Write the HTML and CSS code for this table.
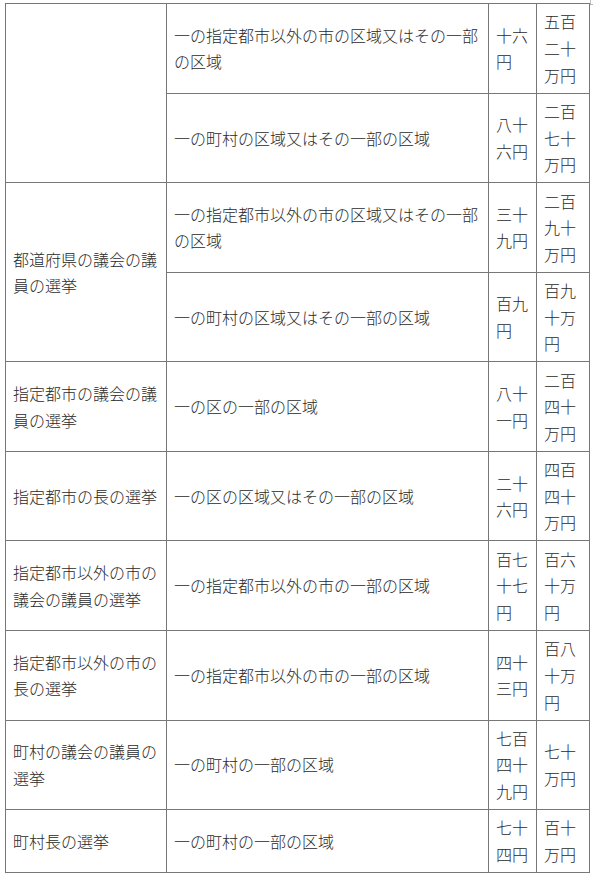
FILE: index.html
```html
<!DOCTYPE html>
<html lang="ja">
<head>
<meta charset="utf-8">
<link rel="stylesheet" href="styles.css">
</head>
<body>
<div class="corner"></div>
<table class="fee-table">
  <colgroup>
    <col class="c1"><col class="c2"><col class="c3"><col class="c4">
  </colgroup>
  <tbody>
    <tr>
      <td rowspan="2"></td>
      <td>一の指定都市以外の市の区域又はその一部の区域</td>
      <td>十六円</td>
      <td>五百二十万円</td>
    </tr>
    <tr>
      <td>一の町村の区域又はその一部の区域</td>
      <td>八十六円</td>
      <td>二百七十万円</td>
    </tr>
    <tr>
      <td rowspan="2">都道府県の議会の議員の選挙</td>
      <td>一の指定都市以外の市の区域又はその一部の区域</td>
      <td>三十九円</td>
      <td>二百九十万円</td>
    </tr>
    <tr>
      <td>一の町村の区域又はその一部の区域</td>
      <td>百九円</td>
      <td>百九十万円</td>
    </tr>
    <tr>
      <td>指定都市の議会の議員の選挙</td>
      <td>一の区の一部の区域</td>
      <td>八十一円</td>
      <td>二百四十万円</td>
    </tr>
    <tr>
      <td>指定都市の長の選挙</td>
      <td>一の区の区域又はその一部の区域</td>
      <td>二十六円</td>
      <td>四百四十万円</td>
    </tr>
    <tr>
      <td>指定都市以外の市の議会の議員の選挙</td>
      <td>一の指定都市以外の市の一部の区域</td>
      <td>百七十七円</td>
      <td>百六十万円</td>
    </tr>
    <tr>
      <td>指定都市以外の市の長の選挙</td>
      <td>一の指定都市以外の市の一部の区域</td>
      <td>四十三円</td>
      <td>百八十万円</td>
    </tr>
    <tr>
      <td>町村の議会の議員の選挙</td>
      <td>一の町村の一部の区域</td>
      <td>七百四十九円</td>
      <td>七十万円</td>
    </tr>
    <tr>
      <td>町村長の選挙</td>
      <td>一の町村の一部の区域</td>
      <td>七十四円</td>
      <td>百十万円</td>
    </tr>
  </tbody>
</table>
</body>
</html>
```
FILE: styles.css
```css
html, body {
  margin: 0;
  padding: 0;
  background: #ffffff;
}
body {
  font-family: "Noto Sans CJK JP", "Noto Sans", sans-serif;
  font-size: 16px;
  font-weight: 300;
  color: #2a2a2a;
  position: relative;
}
.corner {
  position: absolute;
  left: 590px;
  top: 0;
  width: 2px;
  height: 4px;
  border-left: 1px solid #bbbbbb;
  border-bottom: 1px solid #bbbbbb;
}
.fee-table {
  border-collapse: collapse;
  table-layout: fixed;
  width: 584px;
  margin: 3px 0 0 5px;
}
.c1 { width: 161px; }
.c2 { width: 322px; }
.c3 { width: 48px; }
.c4 { width: 53px; }
.fee-table td {
  border: 1px solid #777777;
  padding: 4.4px 7px;
  line-height: 26.6px;
  vertical-align: middle;
  text-align: left;
  word-break: break-all;
}
```
